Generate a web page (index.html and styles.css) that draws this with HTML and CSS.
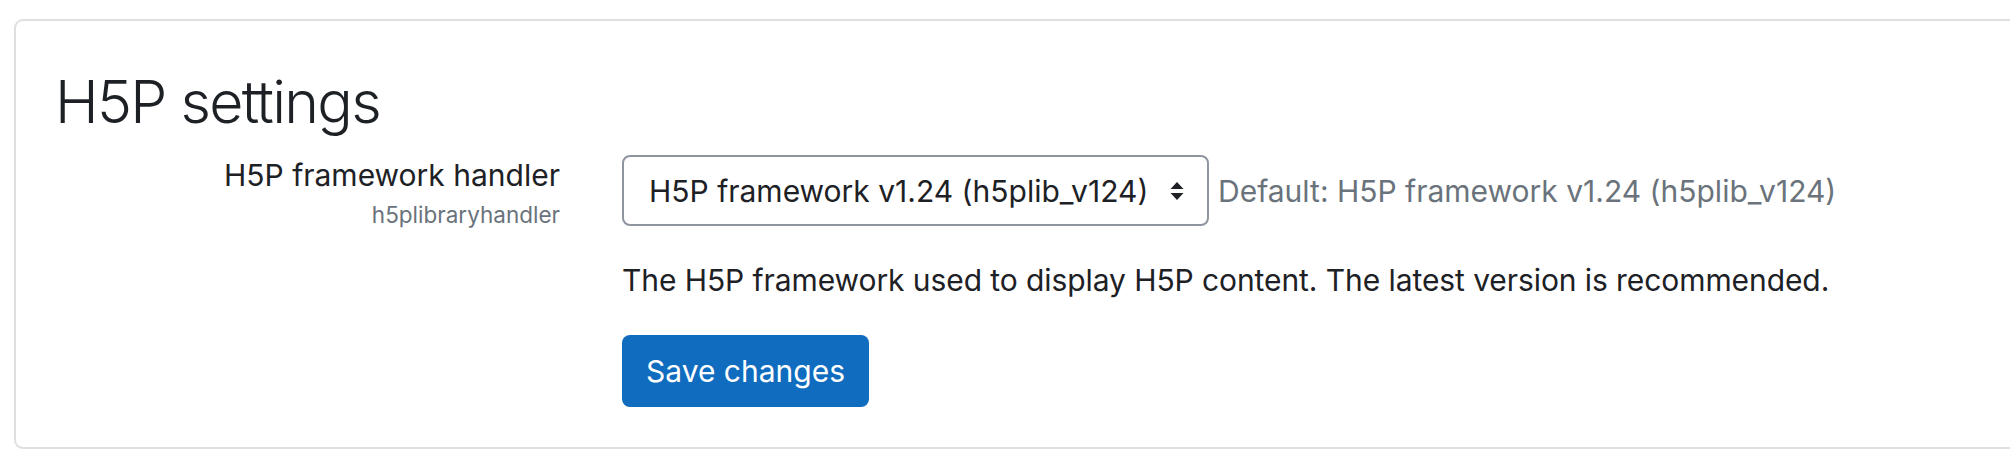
FILE: index.html
```html
<!DOCTYPE html>
<html lang="en">
<head>
<meta charset="utf-8">
<title>H5P settings</title>
<link rel="stylesheet" href="styles.css">
</head>
<body>
<div class="card">
  <h2 class="card-title">H5P settings</h2>
  <div class="setting">
    <div class="setting-label">
      <label class="label-main">H5P framework handler</label>
      <span class="shortname">h5plibraryhandler</span>
    </div>
    <div class="setting-field">
      <div class="field-row">
        <div class="select">
          <span class="select-text">H5P framework v1.24 (h5plib_v124)</span>
          <svg class="select-arrows" width="14" height="20" viewBox="0 0 14 20" aria-hidden="true">
            <path d="M7 1 L13.5 8 L0.5 8 Z" fill="#1d2125"/>
            <path d="M7 19 L13.5 12 L0.5 12 Z" fill="#1d2125"/>
          </svg>
        </div>
        <span class="default">Default: H5P framework v1.24 (h5plib_v124)</span>
      </div>
      <div class="description">The H5P framework used to display H5P content. The latest version is recommended.</div>
    </div>
  </div>
  <div class="actions">
    <button class="btn-primary" type="button">Save changes</button>
  </div>
</div>
</body>
</html>
```
FILE: styles.css
```css
html, body {
  margin: 0;
  padding: 0;
  background: #ffffff;
  overflow: hidden;
}
body {
  font-family: Inter, "Noto Sans", sans-serif;
  color: #1d2125;
  font-size: 30px;
}
.card {
  margin: 19px -40px 0 14px;
  height: 430px;
  box-sizing: border-box;
  border: 2px solid #dfdfdf;
  border-radius: 9px;
  padding: 45px 0 0 39px;
}
.card-title {
  margin: 0 0 17px 0;
  font-size: 59px;
  font-weight: 300;
  line-height: 72px;
  letter-spacing: -1.7px;
}
.setting {
  display: grid;
  grid-template-columns: 505px 1fr;
  column-gap: 62px;
}
.setting-label {
  display: flex;
  flex-direction: column;
  align-items: flex-end;
}
.label-main {
  line-height: 40px;
}
.shortname {
  font-size: 22.5px;
  line-height: 34px;
  color: #6a737b;
  margin-top: 3px;
}
.field-row {
  display: flex;
  align-items: center;
  gap: 9px;
}
.select {
  box-sizing: border-box;
  flex: none;
  width: 587px;
  height: 71px;
  border: 2px solid #8f959e;
  border-radius: 8px;
  display: flex;
  align-items: center;
  justify-content: space-between;
  padding: 0 23px 0 25px;
  color: #1d2125;
}
.select-arrows {
  display: block;
  flex: none;
}
.default {
  color: #6a737b;
  white-space: nowrap;
}
.description {
  margin-top: 32px;
  line-height: 45px;
  letter-spacing: -0.08px;
}
.actions {
  margin-top: 32px;
  padding-left: 567px;
}
.btn-primary {
  box-sizing: border-box;
  width: 247px;
  height: 72px;
  background: #0f6cbf;
  border: none;
  border-radius: 8px;
  color: #ffffff;
  font-family: inherit;
  font-size: 30px;
  padding: 0;
}
```
